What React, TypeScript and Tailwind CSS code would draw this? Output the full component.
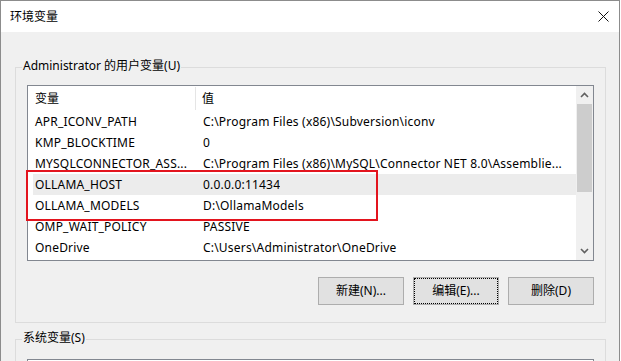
import React from "react";

const rows: [string, string][] = [
  ["APR_ICONV_PATH", "C:\\Program Files (x86)\\Subversion\\iconv"],
  ["KMP_BLOCKTIME", "0"],
  ["MYSQLCONNECTOR_ASS...", "C:\\Program Files (x86)\\MySQL\\Connector NET 8.0\\Assemblie..."],
  ["OLLAMA_HOST", "0.0.0.0:11434"],
  ["OLLAMA_MODELS", "D:\\OllamaModels"],
  ["OMP_WAIT_POLICY", "PASSIVE"],
  ["OneDrive", "C:\\Users\\Administrator\\OneDrive"],
];

function Chevron({ up }: { up?: boolean }) {
  return (
    <svg width="9" height="6" viewBox="0 0 9 6">
      <path
        d={up ? "M1 5 L4.5 1.5 L8 5" : "M1 1 L4.5 4.5 L8 1"}
        fill="none"
        stroke="#606060"
        strokeWidth="1.6"
      />
    </svg>
  );
}

function Btn({ label, focused }: { label: string; focused?: boolean }) {
  return (
    <div
      className={
        "w-[86px] h-[28px] flex items-center justify-center bg-[#e1e1e1] border border-[#adadad] text-[12px] leading-[16px] text-black " +
        (focused ? "outline-1 outline-dotted outline-black -outline-offset-2" : "")
      }
    >
      {label}
    </div>
  );
}

export default function App() {
  return (
    <div className="w-[621px] h-[361px] overflow-hidden bg-white font-['Noto_Sans','Noto_Sans_CJK_SC',sans-serif] text-black">
      <div className="w-[620px] h-[400px] border-l border-t border-r border-[#8c8c8c] bg-[#f0f0f0] flex flex-col">
        <div className="h-[31px] bg-white flex items-center justify-between pl-[9px] pr-[10px] shrink-0">
          <span className="text-[12px] leading-[16px]">环境变量</span>
          <svg width="11" height="11" viewBox="0 0 11 11">
            <path d="M0.5 0.5 L10.5 10.5 M10.5 0.5 L0.5 10.5" stroke="#111" strokeWidth="1" />
          </svg>
        </div>

        {/* User variables group */}
        <div className="relative ml-[14px] mt-[35px] w-[591px] border border-[#dcdcdc] pt-[17px] pl-[11px] pb-[17px]">
          <span className="absolute left-[6px] top-[-10px] px-[1px] bg-[#f0f0f0] text-[12px] leading-[16px] whitespace-nowrap">
            Administrator 的用户变量(U)
          </span>

          <div className="relative w-[567px] h-[176px] border border-[#828790] bg-white flex">
            <div className="flex-1 flex flex-col pl-[5px]">
              <div className="h-[25px] flex items-stretch text-[12px]">
                <div className="w-[163px] flex items-center pl-[2px] border-r border-[#e5e5e5] my-[1px]">变量</div>
                <div className="flex items-center pl-[6px]">值</div>
              </div>
              {rows.map(([k, v], i) => (
                <div
                  key={k}
                  className={
                    "h-[21px] flex items-center text-[12px] tracking-[0.2px] whitespace-nowrap " +
                    (i === 3 ? "bg-[#ececec]" : "")
                  }
                >
                  <div className="w-[163px] pl-[2px] overflow-hidden">{k}</div>
                  <div className="pl-[7px] overflow-hidden">{v}</div>
                </div>
              ))}
            </div>

            <div className="w-[17px] h-full bg-[#f0f0f0] flex flex-col">
              <div className="h-[18px] flex items-center justify-center">
                <Chevron up />
              </div>
              <div className="h-[88px] mx-[1px] bg-[#cdcdcd]" />
              <div className="flex-1" />
              <div className="h-[18px] flex items-center justify-center">
                <Chevron />
              </div>
            </div>

            <div className="absolute left-[-2px] top-[84px] w-[352px] h-[51px] border-2 border-[#e3141e] pointer-events-none" />
          </div>

          <div className="w-[567px] mt-[16px] flex justify-end gap-[9px]">
            <Btn label="新建(N)..." />
            <Btn label="编辑(E)..." focused />
            <Btn label="删除(D)" />
          </div>
        </div>

        {/* System variables group */}
        <div className="relative ml-[14px] mt-[16px] w-[591px] h-[80px] border border-[#dcdcdc] pt-[19px] pl-[11px]">
          <span className="absolute left-[6px] top-[-10px] px-[1px] bg-[#f0f0f0] text-[12px] leading-[16px] whitespace-nowrap">
            系统变量(S)
          </span>
          <div className="w-[567px] h-[60px] border border-[#828790] bg-white" />
        </div>
      </div>
    </div>
  );
}
